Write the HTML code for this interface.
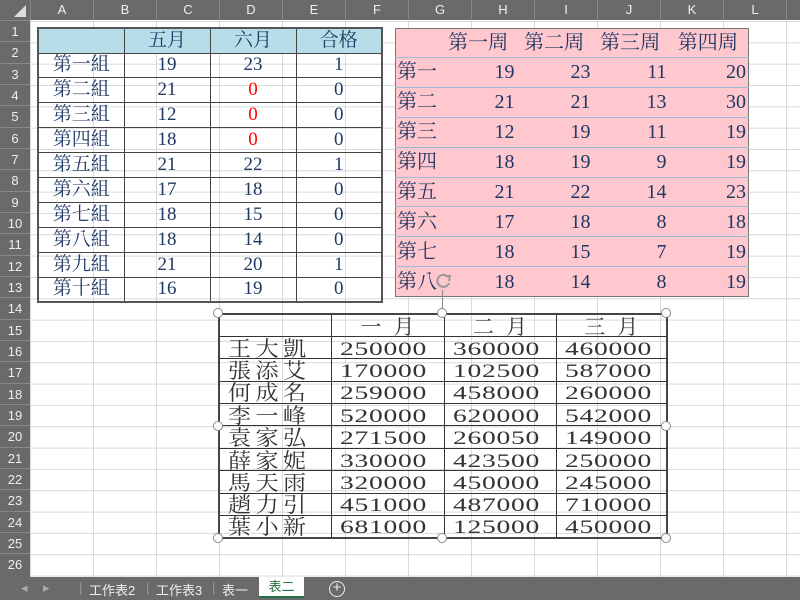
<!DOCTYPE html>
<html><head><meta charset="utf-8"><style>
*{margin:0;padding:0;box-sizing:border-box}
body{width:800px;height:600px;overflow:hidden;background:#fff;position:relative;font-family:"Liberation Serif","Noto Serif CJK TC","Noto Serif CJK SC",serif}
.grid{position:absolute;left:30px;top:20px;width:770px;height:557px;
background-image:linear-gradient(to right,#d9d9d9 1px,transparent 1px),linear-gradient(to bottom,#d9d9d9 1px,transparent 1px);
background-size:63px 21.33px;background-position:0 1px}
.ch{position:absolute;top:0;left:0;width:800px;height:20px;background:#6a6a6a}
.ch div{position:absolute;top:0;height:20px;width:63px;border-left:1px solid #888;color:#eee;font:13px "Liberation Sans",sans-serif;text-align:center;line-height:20px}
.rh{position:absolute;left:0;top:20px;width:30px;height:557px;background:#6a6a6a}
.rh div{position:absolute;left:0;width:30px;height:21.33px;border-top:1px solid #888;color:#eee;font:13px "Liberation Sans",sans-serif;text-align:center;line-height:21px}
.corner{position:absolute;left:0;top:0;width:30px;height:20px;background:#6a6a6a}
.corner:after{content:"";position:absolute;right:4px;bottom:3px;border-left:12px solid transparent;border-bottom:12px solid #ddd}
table{position:absolute;border-collapse:collapse;table-layout:fixed}
td{white-space:nowrap;overflow:hidden}
.t1{left:37px;top:27px;width:344px;border:2px solid #555}
.t1 td{border:1px solid #444;text-align:center;color:#1f3864;font-size:19px;height:24.9px;padding:0;line-height:22px}
.t1 tr:first-child td{background:#b7dde8;height:25px}
.r{color:#f00!important}
.t2{left:395px;top:28px;width:353px;height:268px;background:#ffc7ce;border:1px solid #777}
.t2 td{border-bottom:1px solid #9fb9d9;color:#1f3864;font-size:20px;height:29.9px;padding:0 2px 0 1px;text-align:right;line-height:26px}
.t2 td:first-child{text-align:left}
.t2 tr:first-child td{text-align:center;height:29px}
.t3{left:218px;top:313px;width:448px;border:2px solid #444}
.t3 td{border:1px solid #333;height:22.4px;padding:0 0 0 8px;font-size:19px;color:#333;line-height:20px;white-space:nowrap;overflow:hidden}
.t3 td span{display:inline-block;transform:scaleX(1.45);transform-origin:left;letter-spacing:0.5px;line-height:20px;vertical-align:top;position:relative;top:2px}
.t3 td .n{transform:scaleX(1.1);letter-spacing:4px;font-size:21px;top:1px}
.t3 tr:first-child td{text-align:center;padding:0}
.t3 tr:first-child td span{transform:none;letter-spacing:12px;font-size:21px;margin-left:12px}
.h{position:absolute;width:10px;height:10px;border:1.5px solid #888;border-radius:50%;background:#fff}
.tabs{position:absolute;left:0;top:577px;width:800px;height:23px;background:#6a6a6a;font:13px "Liberation Sans","Noto Sans CJK TC",sans-serif;color:#eee}
.tabs span{position:absolute;top:3px}
</style></head><body>
<div class="grid"></div>
<div class="ch">
<div style="left:30px">A</div><div style="left:93px">B</div><div style="left:156px">C</div><div style="left:219px">D</div><div style="left:282px">E</div><div style="left:345px">F</div><div style="left:408px">G</div><div style="left:471px">H</div><div style="left:534px">I</div><div style="left:597px">J</div><div style="left:660px">K</div><div style="left:723px">L</div><div style="left:786px"></div>
</div>
<div class="corner"></div>
<div class="rh">
<div style="top:0">1</div><div style="top:21.33px">2</div><div style="top:42.66px">3</div><div style="top:64px">4</div><div style="top:85.3px">5</div><div style="top:106.6px">6</div><div style="top:128px">7</div><div style="top:149.3px">8</div><div style="top:170.6px">9</div><div style="top:192px">10</div><div style="top:213.3px">11</div><div style="top:234.6px">12</div><div style="top:256px">13</div><div style="top:277.3px">14</div><div style="top:298.6px">15</div><div style="top:320px">16</div><div style="top:341.3px">17</div><div style="top:362.6px">18</div><div style="top:384px">19</div><div style="top:405.3px">20</div><div style="top:426.6px">21</div><div style="top:448px">22</div><div style="top:469.3px">23</div><div style="top:490.6px">24</div><div style="top:512px">25</div><div style="top:533.3px">26</div>
</div>

<table class="t1">
<colgroup><col style="width:86px"><col style="width:86px"><col style="width:86px"><col style="width:86px"></colgroup>
<tr><td></td><td>五月</td><td>六月</td><td>合格</td></tr>
<tr><td>第一組</td><td>19</td><td>23</td><td>1</td></tr>
<tr><td>第二組</td><td>21</td><td class="r">0</td><td>0</td></tr>
<tr><td>第三組</td><td>12</td><td class="r">0</td><td>0</td></tr>
<tr><td>第四組</td><td>18</td><td class="r">0</td><td>0</td></tr>
<tr><td>第五組</td><td>21</td><td>22</td><td>1</td></tr>
<tr><td>第六組</td><td>17</td><td>18</td><td>0</td></tr>
<tr><td>第七組</td><td>18</td><td>15</td><td>0</td></tr>
<tr><td>第八組</td><td>18</td><td>14</td><td>0</td></tr>
<tr><td>第九組</td><td>21</td><td>20</td><td>1</td></tr>
<tr><td>第十組</td><td>16</td><td>19</td><td>0</td></tr>
</table>

<table class="t2">
<colgroup><col style="width:45px"><col style="width:76px"><col style="width:76px"><col style="width:76px"><col style="width:80px"></colgroup>
<tr><td></td><td>第一周</td><td>第二周</td><td>第三周</td><td>第四周</td></tr>
<tr><td>第一</td><td>19</td><td>23</td><td>11</td><td>20</td></tr>
<tr><td>第二</td><td>21</td><td>21</td><td>13</td><td>30</td></tr>
<tr><td>第三</td><td>12</td><td>19</td><td>11</td><td>19</td></tr>
<tr><td>第四</td><td>18</td><td>19</td><td>9</td><td>19</td></tr>
<tr><td>第五</td><td>21</td><td>22</td><td>14</td><td>23</td></tr>
<tr><td>第六</td><td>17</td><td>18</td><td>8</td><td>18</td></tr>
<tr><td>第七</td><td>18</td><td>15</td><td>7</td><td>19</td></tr>
<tr><td style="border:0">第八</td><td style="border:0">18</td><td style="border:0">14</td><td style="border:0">8</td><td style="border:0">19</td></tr>
</table>

<table class="t3">
<colgroup><col style="width:112px"><col style="width:113px"><col style="width:112px"><col style="width:111px"></colgroup>
<tr><td></td><td><span>一月</span></td><td><span>二月</span></td><td><span>三月</span></td></tr>
<tr><td><span class="n">王大凱</span></td><td><span>250000</span></td><td><span>360000</span></td><td><span>460000</span></td></tr>
<tr><td><span class="n">張添艾</span></td><td><span>170000</span></td><td><span>102500</span></td><td><span>587000</span></td></tr>
<tr><td><span class="n">何成名</span></td><td><span>259000</span></td><td><span>458000</span></td><td><span>260000</span></td></tr>
<tr><td><span class="n">李一峰</span></td><td><span>520000</span></td><td><span>620000</span></td><td><span>542000</span></td></tr>
<tr><td><span class="n">袁家弘</span></td><td><span>271500</span></td><td><span>260050</span></td><td><span>149000</span></td></tr>
<tr><td><span class="n">薛家妮</span></td><td><span>330000</span></td><td><span>423500</span></td><td><span>250000</span></td></tr>
<tr><td><span class="n">馬天雨</span></td><td><span>320000</span></td><td><span>450000</span></td><td><span>245000</span></td></tr>
<tr><td><span class="n">趙力引</span></td><td><span>451000</span></td><td><span>487000</span></td><td><span>710000</span></td></tr>
<tr><td><span class="n">葉小新</span></td><td><span>681000</span></td><td><span>125000</span></td><td><span>450000</span></td></tr>
</table>

<div style="position:absolute;left:442px;top:290px;width:1px;height:23px;background:#888"></div>
<svg style="position:absolute;left:433px;top:271px" width="20" height="20" viewBox="0 0 20 20"><path d="M15 6 A6 6 0 1 0 16 12" fill="none" stroke="#999" stroke-width="2"/><path d="M12 5 L17 5 L16 10" fill="none" stroke="#999" stroke-width="2"/></svg>
<div class="h" style="left:213px;top:308px"></div>
<div class="h" style="left:437px;top:308px"></div>
<div class="h" style="left:661px;top:308px"></div>
<div class="h" style="left:213px;top:421px"></div>
<div class="h" style="left:661px;top:421px"></div>
<div class="h" style="left:213px;top:533px"></div>
<div class="h" style="left:437px;top:533px"></div>
<div class="h" style="left:661px;top:533px"></div>

<div class="tabs">
<span style="left:21px;color:#aaa">◂</span><span style="left:43px;color:#aaa">▸</span>
<span style="left:79px;color:#999">|</span>
<span style="left:89px">工作表2</span>
<span style="left:146px;color:#999">|</span>
<span style="left:156px">工作表3</span>
<span style="left:212px;color:#999">|</span>
<span style="left:222px">表一</span>
<div style="position:absolute;left:259px;top:0;width:45px;height:21px;background:#fff;border-bottom:2px solid #217346;color:#217346;text-align:center;line-height:19px">表二</div>
<div style="position:absolute;left:329px;top:4px;width:16px;height:16px;border:1.5px solid #eee;border-radius:50%;text-align:center;line-height:12px;font-size:15px">+</div>
</div>
</body></html>
